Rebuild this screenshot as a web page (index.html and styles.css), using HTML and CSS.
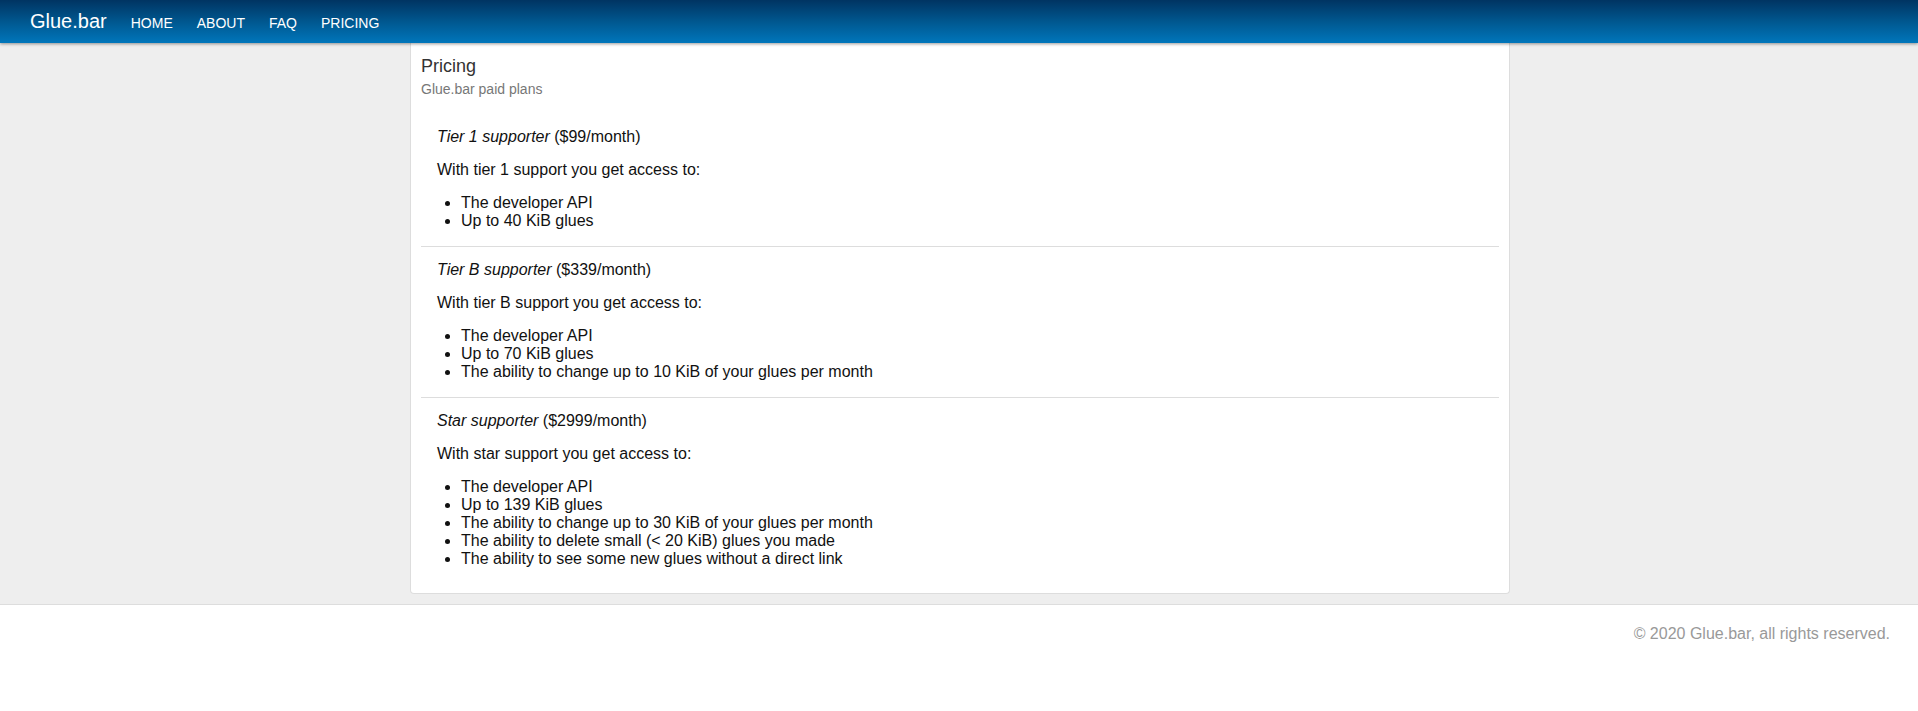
FILE: index.html
```html
<!DOCTYPE html>
<html lang="en">
<head>
<meta charset="utf-8">
<title>Glue.bar - Pricing</title>
<link rel="stylesheet" href="styles.css">
</head>
<body>
<header class="navbar">
  <a class="brand" href="#">Glue.bar</a>
  <nav class="nav">
    <a class="nav-link" href="#">HOME</a>
    <a class="nav-link" href="#">ABOUT</a>
    <a class="nav-link" href="#">FAQ</a>
    <a class="nav-link" href="#">PRICING</a>
  </nav>
</header>
<main class="main">
  <section class="panel">
    <div class="panel-head">
      <h1 class="title">Pricing</h1>
      <p class="subtitle">Glue.bar paid plans</p>
    </div>
    <div class="tier">
      <p class="tier-name"><em>Tier 1 supporter</em> ($99/month)</p>
      <p class="tier-intro">With tier 1 support you get access to:</p>
      <ul class="perks">
        <li>The developer API</li>
        <li>Up to 40 KiB glues</li>
      </ul>
    </div>
    <div class="tier">
      <p class="tier-name"><em>Tier B supporter</em> ($339/month)</p>
      <p class="tier-intro">With tier B support you get access to:</p>
      <ul class="perks">
        <li>The developer API</li>
        <li>Up to 70 KiB glues</li>
        <li>The ability to change up to 10 KiB of your glues per month</li>
      </ul>
    </div>
    <div class="tier tier-last">
      <p class="tier-name"><em>Star supporter</em> ($2999/month)</p>
      <p class="tier-intro">With star support you get access to:</p>
      <ul class="perks">
        <li>The developer API</li>
        <li>Up to 139 KiB glues</li>
        <li>The ability to change up to 30 KiB of your glues per month</li>
        <li>The ability to delete small (&lt; 20 KiB) glues you made</li>
        <li>The ability to see some new glues without a direct link</li>
      </ul>
    </div>
  </section>
</main>
<footer class="footer">
  <p class="copyright">© 2020 Glue.bar, all rights reserved.</p>
</footer>
</body>
</html>
```

FILE: styles.css
```css
html, body {
  margin: 0;
  padding: 0;
  background: #ffffff;
  font-family: "Liberation Sans", Arial, sans-serif;
  color: #111111;
}

.navbar {
  position: relative;
  z-index: 2;
  height: 43px;
  box-sizing: border-box;
  padding: 10px 0 0 30px;
  display: flex;
  align-items: baseline;
  background: linear-gradient(to bottom, #003462 0%, #00578f 50%, #0076bb 100%);
  box-shadow: 0 1px 3px rgba(0, 0, 0, 0.4);
}

.brand {
  font-size: 20px;
  line-height: 23px;
  color: #ffffff;
  text-decoration: none;
  margin-right: 12px;
}

.nav {
  display: flex;
  align-items: baseline;
}

.nav-link {
  font-size: 14px;
  line-height: 16px;
  color: #ffffff;
  text-decoration: none;
  padding: 0 12px;
}

.main {
  position: relative;
  z-index: 1;
  background: #eeeeee;
  padding: 0 0 10px 2px;
}

.panel {
  width: 1100px;
  box-sizing: border-box;
  margin: 0 auto;
  background: #ffffff;
  border: 1px solid #dddddd;
  border-top: none;
  border-radius: 0 0 4px 4px;
  padding: 13px 10px 10px;
}

.panel-head {
  margin-bottom: 17px;
}

.title {
  margin: 0;
  font-size: 18px;
  line-height: 20px;
  font-weight: normal;
  color: #333333;
}

.subtitle {
  margin: 5px 0 0;
  font-size: 14px;
  line-height: 16px;
  color: #777777;
}

.tier {
  padding: 14px 16px 16px;
  border-bottom: 1px solid #dddddd;
  font-size: 16px;
  line-height: 18px;
}

.tier-last {
  border-bottom: none;
  padding-bottom: 15px;
}

.tier-name,
.tier-intro {
  margin: 0 0 15px;
}

.perks {
  margin: 0;
  padding-left: 24px;
}

.footer {
  border-top: 1px solid #dddddd;
  padding: 20px 28px 0 0;
  display: flex;
  justify-content: flex-end;
}

.copyright {
  margin: 0;
  font-size: 16px;
  line-height: 18px;
  color: #999999;
}
```
